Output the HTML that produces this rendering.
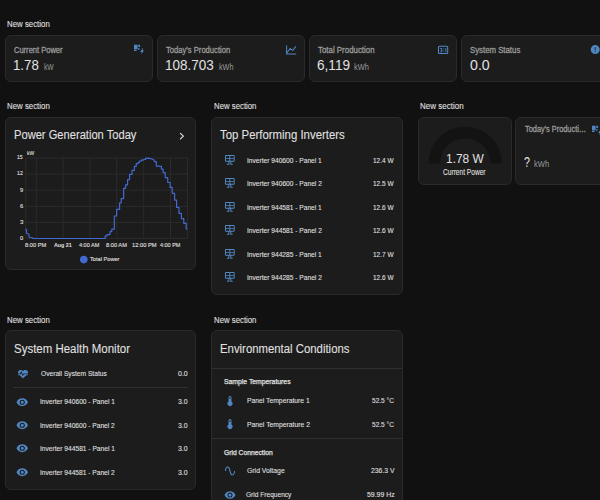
<!DOCTYPE html>
<html><head><meta charset="utf-8"><style>
html,body{margin:0;padding:0;width:600px;height:500px;overflow:hidden;background:#111111;}
body{position:relative;font-family:"Liberation Sans",sans-serif;}
.card{position:absolute;box-sizing:border-box;background:#1c1c1c;border:1px solid #2a2a2a;border-radius:6px;}
.t{position:absolute;white-space:nowrap;line-height:1;transform-origin:0 0;}
.ic{position:absolute;}
</style></head><body>
<div class="card" style="left:5px;top:35px;width:148px;height:47px;"></div>
<div class="card" style="left:157px;top:35px;width:148px;height:47px;"></div>
<div class="card" style="left:309px;top:35px;width:148px;height:47px;"></div>
<div class="card" style="left:461px;top:35px;width:148px;height:47px;"></div>
<div class="card" style="left:5px;top:117px;width:191px;height:153px;"></div>
<div class="card" style="left:211px;top:117px;width:192px;height:178px;"></div>
<svg class="ic" style="left:223.9px;top:154.0px;width:11.64px;height:11.64px" viewBox="0 0 24 24"><path fill="#5087c2" d="M4,2H20A2,2 0 0,1 22,4V14A2,2 0 0,1 20,16H15V20H18V22H13V16H11V22H6V20H9V16H4A2,2 0 0,1 2,14V4A2,2 0 0,1 4,2M4,4V8H11V4H4M4,14H11V10H4V14M20,14V10H13V14H20M20,4H13V8H20V4Z"/></svg>
<svg class="ic" style="left:223.9px;top:177.44px;width:11.64px;height:11.64px" viewBox="0 0 24 24"><path fill="#5087c2" d="M4,2H20A2,2 0 0,1 22,4V14A2,2 0 0,1 20,16H15V20H18V22H13V16H11V22H6V20H9V16H4A2,2 0 0,1 2,14V4A2,2 0 0,1 4,2M4,4V8H11V4H4M4,14H11V10H4V14M20,14V10H13V14H20M20,4H13V8H20V4Z"/></svg>
<svg class="ic" style="left:223.9px;top:200.88px;width:11.64px;height:11.64px" viewBox="0 0 24 24"><path fill="#5087c2" d="M4,2H20A2,2 0 0,1 22,4V14A2,2 0 0,1 20,16H15V20H18V22H13V16H11V22H6V20H9V16H4A2,2 0 0,1 2,14V4A2,2 0 0,1 4,2M4,4V8H11V4H4M4,14H11V10H4V14M20,14V10H13V14H20M20,4H13V8H20V4Z"/></svg>
<svg class="ic" style="left:223.9px;top:224.32px;width:11.64px;height:11.64px" viewBox="0 0 24 24"><path fill="#5087c2" d="M4,2H20A2,2 0 0,1 22,4V14A2,2 0 0,1 20,16H15V20H18V22H13V16H11V22H6V20H9V16H4A2,2 0 0,1 2,14V4A2,2 0 0,1 4,2M4,4V8H11V4H4M4,14H11V10H4V14M20,14V10H13V14H20M20,4H13V8H20V4Z"/></svg>
<svg class="ic" style="left:223.9px;top:247.76px;width:11.64px;height:11.64px" viewBox="0 0 24 24"><path fill="#5087c2" d="M4,2H20A2,2 0 0,1 22,4V14A2,2 0 0,1 20,16H15V20H18V22H13V16H11V22H6V20H9V16H4A2,2 0 0,1 2,14V4A2,2 0 0,1 4,2M4,4V8H11V4H4M4,14H11V10H4V14M20,14V10H13V14H20M20,4H13V8H20V4Z"/></svg>
<svg class="ic" style="left:223.9px;top:271.2px;width:11.64px;height:11.64px" viewBox="0 0 24 24"><path fill="#5087c2" d="M4,2H20A2,2 0 0,1 22,4V14A2,2 0 0,1 20,16H15V20H18V22H13V16H11V22H6V20H9V16H4A2,2 0 0,1 2,14V4A2,2 0 0,1 4,2M4,4V8H11V4H4M4,14H11V10H4V14M20,14V10H13V14H20M20,4H13V8H20V4Z"/></svg>
<div class="card" style="left:418px;top:117px;width:94px;height:68px;"></div>
<div class="card" style="left:515px;top:117px;width:94px;height:68px;"></div>
<div class="card" style="left:5px;top:330px;width:191px;height:160px;"></div>
<svg class="ic" style="left:16.5px;top:367.5px;width:12px;height:12px" viewBox="0 0 24 24"><path fill="#5087c2" d="M7.5,4A5.5,5.5 0 0,0 2,9.5C2,10 2.09,10.5 2.22,11H6.3L7.57,7.63C7.87,6.83 9.05,6.75 9.43,7.63L11.5,13L12.09,11.58C12.22,11.25 12.57,11 13,11H21.78C21.91,10.5 22,10 22,9.5A5.5,5.5 0 0,0 16.5,4C14.64,4 13,4.93 12,6.34C11,4.93 9.36,4 7.5,4V4M3,12.5A1,1 0 0,0 2,13.5A1,1 0 0,0 3,14.5H5.44L11,20C12,20.9 12,20.9 13,20L18.56,14.5H21A1,1 0 0,0 22,13.5A1,1 0 0,0 21,12.5H13.4L12.47,14.8C12.07,15.81 10.92,15.67 10.55,14.83L8.5,9.5L7.54,11.83C7.39,12.21 7.05,12.5 6.6,12.5H3Z"/></svg>
<div style="position:absolute;left:13px;top:387px;width:175px;height:1px;background:#303030"></div>
<svg class="ic" style="left:16.25px;top:395.65px;width:12.5px;height:12.5px" viewBox="0 0 24 24"><path fill="#5087c2" d="M12,9A3,3 0 0,0 9,12A3,3 0 0,0 12,15A3,3 0 0,0 15,12A3,3 0 0,0 12,9M12,17A5,5 0 0,1 7,12A5,5 0 0,1 12,7A5,5 0 0,1 17,12A5,5 0 0,1 12,17M12,4.5C7,4.5 2.73,7.61 1,12C2.73,16.39 7,19.5 12,19.5C17,19.5 21.27,16.39 23,12C21.27,7.61 17,4.5 12,4.5Z"/></svg>
<svg class="ic" style="left:16.25px;top:419.04999999999995px;width:12.5px;height:12.5px" viewBox="0 0 24 24"><path fill="#5087c2" d="M12,9A3,3 0 0,0 9,12A3,3 0 0,0 12,15A3,3 0 0,0 15,12A3,3 0 0,0 12,9M12,17A5,5 0 0,1 7,12A5,5 0 0,1 12,7A5,5 0 0,1 17,12A5,5 0 0,1 12,17M12,4.5C7,4.5 2.73,7.61 1,12C2.73,16.39 7,19.5 12,19.5C17,19.5 21.27,16.39 23,12C21.27,7.61 17,4.5 12,4.5Z"/></svg>
<svg class="ic" style="left:16.25px;top:442.45px;width:12.5px;height:12.5px" viewBox="0 0 24 24"><path fill="#5087c2" d="M12,9A3,3 0 0,0 9,12A3,3 0 0,0 12,15A3,3 0 0,0 15,12A3,3 0 0,0 12,9M12,17A5,5 0 0,1 7,12A5,5 0 0,1 12,7A5,5 0 0,1 17,12A5,5 0 0,1 12,17M12,4.5C7,4.5 2.73,7.61 1,12C2.73,16.39 7,19.5 12,19.5C17,19.5 21.27,16.39 23,12C21.27,7.61 17,4.5 12,4.5Z"/></svg>
<svg class="ic" style="left:16.25px;top:465.84999999999997px;width:12.5px;height:12.5px" viewBox="0 0 24 24"><path fill="#5087c2" d="M12,9A3,3 0 0,0 9,12A3,3 0 0,0 12,15A3,3 0 0,0 15,12A3,3 0 0,0 12,9M12,17A5,5 0 0,1 7,12A5,5 0 0,1 12,7A5,5 0 0,1 17,12A5,5 0 0,1 12,17M12,4.5C7,4.5 2.73,7.61 1,12C2.73,16.39 7,19.5 12,19.5C17,19.5 21.27,16.39 23,12C21.27,7.61 17,4.5 12,4.5Z"/></svg>
<div class="card" style="left:211px;top:330px;width:192px;height:191px;"></div>
<div style="position:absolute;left:212px;top:368px;width:190px;height:1px;background:#303030"></div>
<div style="position:absolute;left:212px;top:438px;width:190px;height:1px;background:#303030"></div>
<svg class="ic" style="left:223.5px;top:395px;width:12px;height:12px" viewBox="0 0 24 24"><path fill="#5087c2" d="M15 13V5A3 3 0 0 0 9 5V13A5 5 0 1 0 15 13M12 4A1 1 0 0 1 13 5V8H11V5A1 1 0 0 1 12 4Z"/></svg>
<svg class="ic" style="left:223.5px;top:418px;width:12px;height:12px" viewBox="0 0 24 24"><path fill="#5087c2" d="M15 13V5A3 3 0 0 0 9 5V13A5 5 0 1 0 15 13M12 4A1 1 0 0 1 13 5V8H11V5A1 1 0 0 1 12 4Z"/></svg>
<svg class="ic" style="left:223.5px;top:465px;width:12px;height:12px" viewBox="0 0 24 24"><path fill="#5087c2" d="M16.5,21C13.5,21 12.31,16.76 11.05,12.28C10.14,9.04 9,5 7.5,5C4.11,5 4,11.93 4,12H2C2,11.63 2.06,3 7.5,3C10.5,3 11.71,7.25 12.97,11.74C13.83,14.8 15,19 16.5,19C19.94,19 20.03,12.07 20.03,12H22.03C22.03,12.37 21.97,21 16.5,21Z"/></svg>
<svg class="ic" style="left:223.5px;top:489px;width:12px;height:12px" viewBox="0 0 24 24"><path fill="#5087c2" d="M12,9A3,3 0 0,0 9,12A3,3 0 0,0 12,15A3,3 0 0,0 15,12A3,3 0 0,0 12,9M12,17A5,5 0 0,1 7,12A5,5 0 0,1 12,7A5,5 0 0,1 17,12A5,5 0 0,1 12,17M12,4.5C7,4.5 2.73,7.61 1,12C2.73,16.39 7,19.5 12,19.5C17,19.5 21.27,16.39 23,12C21.27,7.61 17,4.5 12,4.5Z"/></svg>
<svg style="position:absolute;left:0;top:0" width="600" height="500" viewBox="0 0 600 500"><path d="M428.4,163.6 A36.8,36.8 0 0 1 502.0,163.6 L490.4,163.6 A25.2,25.2 0 0 0 440.0,163.6 Z" fill="#131313"/><line x1="25.5" y1="158" x2="187.5" y2="158" stroke="#2b2b2b" stroke-width="1"/><line x1="25.5" y1="174" x2="187.5" y2="174" stroke="#2b2b2b" stroke-width="1"/><line x1="25.5" y1="190.2" x2="187.5" y2="190.2" stroke="#2b2b2b" stroke-width="1"/><line x1="25.5" y1="206.4" x2="187.5" y2="206.4" stroke="#2b2b2b" stroke-width="1"/><line x1="25.5" y1="222.4" x2="187.5" y2="222.4" stroke="#2b2b2b" stroke-width="1"/><line x1="25.5" y1="238.4" x2="187.5" y2="238.4" stroke="#2b2b2b" stroke-width="1"/><line x1="25.75" y1="158" x2="25.75" y2="238.4" stroke="#2b2b2b" stroke-width="1"/><line x1="36.3" y1="158" x2="36.3" y2="238.4" stroke="#2b2b2b" stroke-width="1"/><line x1="63.1" y1="158" x2="63.1" y2="238.4" stroke="#2b2b2b" stroke-width="1"/><line x1="90.0" y1="158" x2="90.0" y2="238.4" stroke="#2b2b2b" stroke-width="1"/><line x1="116.8" y1="158" x2="116.8" y2="238.4" stroke="#2b2b2b" stroke-width="1"/><line x1="143.7" y1="158" x2="143.7" y2="238.4" stroke="#2b2b2b" stroke-width="1"/><line x1="170.5" y1="158" x2="170.5" y2="238.4" stroke="#2b2b2b" stroke-width="1"/><line x1="187.5" y1="158" x2="187.5" y2="238.4" stroke="#2b2b2b" stroke-width="1"/><path d="M25.75,229.25 L26.5,229.75 L26.5,233.25 L29,234.25 L29,237.25 L32,237.5 L33.25,238.5 L105.2,238.5 L105.2,235.8 L107,235.8 L107,234.6 L110,234.6 L110,231.6 L111.8,231.6 L111.8,229.2 L114.3,229.2 L114.3,216 L116.6,216 L116.6,209.4 L119.6,209.4 L119.6,202.8 L121.2,202.8 L121.2,198.6 L123.6,198.6 L123.6,188.4 L125.6,188.4 L125.6,184.8 L127.6,184.8 L127.6,179.6 L129.6,179.6 L129.6,174.4 L132,174.4 L132,170.4 L134.4,170.4 L134.4,166.4 L136.2,166.4 L136.2,163.7 L138,163.7 L138,162.5 L139.5,162.5 L139.5,161 L141.3,161 L141.3,160.1 L143.4,160.1 L143.4,159.5 L145.5,159.5 L145.5,158.3 L148,158.2 L150.6,158.6 L153.6,159.5 L154.5,161.6 L156.3,161.6 L156.3,166.1 L159,166.1 L160,166.4 L161.4,166.4 L161.4,169.2 L163.1,169.2 L163.1,172.7 L165.2,172.7 L165.2,177.6 L167.7,177.6 L167.7,182.5 L170.1,182.5 L170.1,187.4 L172.2,187.4 L172.2,193.3 L174.6,193.3 L174.6,200.2 L176.6,200.2 L176.6,207.4 L179,207.4 L179,213.4 L181.4,213.4 L181.4,218.6 L183.8,218.6 L183.8,223.4 L186.2,223.4 L186.2,229 L187,229" fill="none" stroke="#4269d0" stroke-width="1.2" stroke-linejoin="round" stroke-linecap="round"/><circle cx="83.8" cy="259.6" r="3.8" fill="#4269d0"/></svg>
<svg style="position:absolute;left:0;top:0" width="600" height="500" viewBox="0 0 600 500"><path fill="#5087c2" d="M134,44.8H137.6V48.9H134Z M138.3,44.8H140.1V47H138.3Z M134,49.5H136.6V51H134Z M137.6,49.3L139.2,47.8L139.8,48.8L138.2,50.2Z M142.6,48.2L140.2,52H141.8L141.2,54.3L144,50.4H142.4L143.2,48.2Z"/><path fill="#5087c2" d="M592,125.8H595.6V129.9H592Z M596.3,125.8H598.1V128H596.3Z M592,130.5H594.6V132H592Z M595.6,130.3L597.2,128.8L597.8,129.8L596.2,131.2Z M600.6,129.2L598.2,133H599.8L599.2,135.3L602,131.4H600.4L601.2,129.2Z"/><path fill="none" stroke="#5087c2" stroke-width="1.05" d="M286.6,45.4V53.9H296.2 M286.8,53 L290.2,48.4 L292.8,50.6 L295.8,46.4"/><rect x="438.5" y="46.3" width="9.2" height="7.2" rx="1" fill="none" stroke="#5087c2" stroke-width="1.05"/><path fill="#5087c2" d="M440.2,48H442.2V52.2H440.2V51.4H441.4V50.5H440.6V49.8H441.4V48.8H440.2Z M443.4,48.6H444.2V49.4H443.4Z M443.4,50.8H444.2V51.6H443.4Z M445.4,48H446.3V52.2H445.4Z"/><circle cx="595.2" cy="49.6" r="4.5" fill="#5087c2"/><rect x="594.75" y="47.2" width="0.9" height="3.1" fill="#1c1c1c"/><rect x="594.75" y="50.9" width="0.9" height="0.9" fill="#1c1c1c"/></svg>
<div class="t" style="left:6.59px;top:19.89px;font-size:8.4px;font-weight:400;color:#e1e1e1;transform:scaleX(0.9377);-webkit-text-stroke:0.08px currentColor;">New section</div>
<div class="t" style="left:13.64px;top:45.72px;font-size:8.6px;font-weight:400;color:#9b9b9b;transform:scaleX(0.8755);-webkit-text-stroke:0.3px currentColor;">Current Power</div>
<div class="t" style="left:13.34px;top:58.15px;font-size:14px;font-weight:400;color:#e1e1e1;transform:scaleX(0.9470);">1.78</div>
<div class="t" style="left:43.57px;top:63.10px;font-size:8.5px;font-weight:400;color:#9b9b9b;transform:scaleX(0.7922);">kW</div>
<div class="t" style="left:166.46px;top:45.72px;font-size:8.6px;font-weight:400;color:#9b9b9b;transform:scaleX(0.8877);-webkit-text-stroke:0.3px currentColor;">Today's Production</div>
<div class="t" style="left:165.40px;top:58.15px;font-size:14px;font-weight:400;color:#e1e1e1;transform:scaleX(0.9643);">108.703</div>
<div class="t" style="left:218.91px;top:63.10px;font-size:8.5px;font-weight:400;color:#9b9b9b;transform:scaleX(0.8510);">kWh</div>
<div class="t" style="left:317.65px;top:45.72px;font-size:8.6px;font-weight:400;color:#9b9b9b;transform:scaleX(0.9178);-webkit-text-stroke:0.3px currentColor;">Total Production</div>
<div class="t" style="left:317.41px;top:58.15px;font-size:14px;font-weight:400;color:#e1e1e1;transform:scaleX(0.9708);">6,119</div>
<div class="t" style="left:354.41px;top:63.10px;font-size:8.5px;font-weight:400;color:#9b9b9b;transform:scaleX(0.8759);">kWh</div>
<div class="t" style="left:469.55px;top:45.72px;font-size:8.6px;font-weight:400;color:#9b9b9b;transform:scaleX(0.9075);-webkit-text-stroke:0.3px currentColor;">System Status</div>
<div class="t" style="left:469.55px;top:58.15px;font-size:14px;font-weight:400;color:#e1e1e1;transform:scaleX(1.0132);">0.0</div>
<div class="t" style="left:6.59px;top:101.79px;font-size:8.4px;font-weight:400;color:#e1e1e1;transform:scaleX(0.9377);-webkit-text-stroke:0.08px currentColor;">New section</div>
<div class="t" style="left:213.62px;top:101.79px;font-size:8.4px;font-weight:400;color:#e1e1e1;transform:scaleX(0.9303);-webkit-text-stroke:0.08px currentColor;">New section</div>
<div class="t" style="left:420.18px;top:101.79px;font-size:8.4px;font-weight:400;color:#e1e1e1;transform:scaleX(0.9555);-webkit-text-stroke:0.08px currentColor;">New section</div>
<div class="t" style="left:13.54px;top:129.04px;font-size:12px;font-weight:400;color:#e1e1e1;transform:scaleX(0.9284);-webkit-text-stroke:0.08px currentColor;">Power Generation Today</div>
<div class="t" style="left:220.39px;top:128.54px;font-size:12px;font-weight:400;color:#e1e1e1;transform:scaleX(0.9496);-webkit-text-stroke:0.08px currentColor;">Top Performing Inverters</div>
<div class="t" style="left:445.78px;top:151.64px;font-size:13.3px;font-weight:400;color:#e1e1e1;transform:scaleX(0.8964);">1.78 W</div>
<div class="t" style="left:443.48px;top:167.97px;font-size:8.3px;font-weight:400;color:#e1e1e1;transform:scaleX(0.7955);-webkit-text-stroke:0.08px currentColor;">Current Power</div>
<div class="t" style="left:524.85px;top:124.72px;font-size:8.6px;font-weight:400;color:#9b9b9b;transform:scaleX(0.8575);-webkit-text-stroke:0.3px currentColor;">Today's Producti…</div>
<div class="t" style="left:523.83px;top:154.85px;font-size:14px;font-weight:400;color:#e1e1e1;transform:scaleX(0.7615);">?</div>
<div class="t" style="left:533.52px;top:159.80px;font-size:8.5px;font-weight:400;color:#9b9b9b;transform:scaleX(0.8890);">kWh</div>
<div class="t" style="left:6.59px;top:315.89px;font-size:8.4px;font-weight:400;color:#e1e1e1;transform:scaleX(0.9377);-webkit-text-stroke:0.08px currentColor;">New section</div>
<div class="t" style="left:214.12px;top:315.89px;font-size:8.4px;font-weight:400;color:#e1e1e1;transform:scaleX(0.9303);-webkit-text-stroke:0.08px currentColor;">New section</div>
<div class="t" style="left:13.52px;top:342.54px;font-size:12px;font-weight:400;color:#e1e1e1;transform:scaleX(0.9561);-webkit-text-stroke:0.08px currentColor;">System Health Monitor</div>
<div class="t" style="left:40.60px;top:369.87px;font-size:7px;font-weight:400;color:#e1e1e1;transform:scaleX(0.9497);-webkit-text-stroke:0.08px currentColor;">Overall System Status</div>
<div class="t" style="left:178.24px;top:369.87px;font-size:7px;font-weight:400;color:#e1e1e1;transform:scaleX(0.9980);-webkit-text-stroke:0.08px currentColor;">0.0</div>
<div class="t" style="left:220.13px;top:343.34px;font-size:12px;font-weight:400;color:#e1e1e1;transform:scaleX(0.9468);-webkit-text-stroke:0.08px currentColor;">Environmental Conditions</div>
<div class="t" style="left:223.76px;top:378.07px;font-size:7px;font-weight:400;color:#e1e1e1;transform:scaleX(0.9736);-webkit-text-stroke:0.25px currentColor;">Sample Temperatures</div>
<div class="t" style="left:246.66px;top:397.07px;font-size:7px;font-weight:400;color:#e1e1e1;transform:scaleX(0.9673);-webkit-text-stroke:0.08px currentColor;">Panel Temperature 1</div>
<div class="t" style="left:372.44px;top:397.07px;font-size:7px;font-weight:400;color:#e1e1e1;transform:scaleX(0.9369);-webkit-text-stroke:0.08px currentColor;">52.5 °C</div>
<div class="t" style="left:246.68px;top:420.87px;font-size:7px;font-weight:400;color:#e1e1e1;transform:scaleX(0.9704);-webkit-text-stroke:0.08px currentColor;">Panel Temperature 2</div>
<div class="t" style="left:372.44px;top:421.17px;font-size:7px;font-weight:400;color:#e1e1e1;transform:scaleX(0.9369);-webkit-text-stroke:0.08px currentColor;">52.5 °C</div>
<div class="t" style="left:223.73px;top:448.67px;font-size:7px;font-weight:400;color:#e1e1e1;transform:scaleX(0.9617);-webkit-text-stroke:0.25px currentColor;">Grid Connection</div>
<div class="t" style="left:246.86px;top:467.07px;font-size:7px;font-weight:400;color:#e1e1e1;transform:scaleX(0.9782);-webkit-text-stroke:0.08px currentColor;">Grid Voltage</div>
<div class="t" style="left:370.59px;top:467.07px;font-size:7px;font-weight:400;color:#e1e1e1;transform:scaleX(0.9723);-webkit-text-stroke:0.08px currentColor;">236.3 V</div>
<div class="t" style="left:246.42px;top:491.27px;font-size:7px;font-weight:400;color:#e1e1e1;transform:scaleX(0.9410);-webkit-text-stroke:0.08px currentColor;">Grid Frequency</div>
<div class="t" style="left:367.14px;top:491.27px;font-size:7px;font-weight:400;color:#e1e1e1;transform:scaleX(0.9876);-webkit-text-stroke:0.08px currentColor;">59.99 Hz</div>
<div class="t" style="left:26.61px;top:149.92px;font-size:6px;font-weight:400;color:#e1e1e1;transform:scaleX(0.8254);-webkit-text-stroke:0.1px currentColor;">kW</div>
<div class="t" style="left:25.21px;top:242.76px;font-size:5.6px;font-weight:400;color:#e1e1e1;transform:scaleX(1.0209);-webkit-text-stroke:0.1px currentColor;">8:00 PM</div>
<div class="t" style="left:53.90px;top:242.76px;font-size:5.6px;font-weight:700;color:#e1e1e1;transform:scaleX(0.9522);">Aug 21</div>
<div class="t" style="left:79.26px;top:242.76px;font-size:5.6px;font-weight:400;color:#e1e1e1;transform:scaleX(0.9863);-webkit-text-stroke:0.1px currentColor;">4:00 AM</div>
<div class="t" style="left:106.20px;top:242.76px;font-size:5.6px;font-weight:400;color:#e1e1e1;transform:scaleX(1.0169);-webkit-text-stroke:0.1px currentColor;">8:00 AM</div>
<div class="t" style="left:131.76px;top:242.76px;font-size:5.6px;font-weight:400;color:#e1e1e1;transform:scaleX(1.0263);-webkit-text-stroke:0.1px currentColor;">12:00 PM</div>
<div class="t" style="left:160.25px;top:242.76px;font-size:5.6px;font-weight:400;color:#e1e1e1;transform:scaleX(0.9777);-webkit-text-stroke:0.1px currentColor;">4:00 PM</div>
<div class="t" style="left:90.25px;top:255.92px;font-size:6px;font-weight:400;color:#e1e1e1;transform:scaleX(0.9404);-webkit-text-stroke:0.1px currentColor;">Total Power</div>
<div class="t" style="left:247.38px;top:156.87px;font-size:7px;font-weight:400;color:#e1e1e1;transform:scaleX(0.9464);-webkit-text-stroke:0.08px currentColor;">Inverter 940600 - Panel 1</div>
<div class="t" style="left:373.11px;top:156.87px;font-size:7px;font-weight:400;color:#e1e1e1;transform:scaleX(0.9261);-webkit-text-stroke:0.08px currentColor;">12.4 W</div>
<div class="t" style="left:247.39px;top:180.31px;font-size:7px;font-weight:400;color:#e1e1e1;transform:scaleX(0.9474);-webkit-text-stroke:0.08px currentColor;">Inverter 940600 - Panel 2</div>
<div class="t" style="left:373.11px;top:180.31px;font-size:7px;font-weight:400;color:#e1e1e1;transform:scaleX(0.9261);-webkit-text-stroke:0.08px currentColor;">12.5 W</div>
<div class="t" style="left:247.38px;top:203.75px;font-size:7px;font-weight:400;color:#e1e1e1;transform:scaleX(0.9464);-webkit-text-stroke:0.08px currentColor;">Inverter 944581 - Panel 1</div>
<div class="t" style="left:373.11px;top:203.75px;font-size:7px;font-weight:400;color:#e1e1e1;transform:scaleX(0.9261);-webkit-text-stroke:0.08px currentColor;">12.6 W</div>
<div class="t" style="left:247.39px;top:227.19px;font-size:7px;font-weight:400;color:#e1e1e1;transform:scaleX(0.9474);-webkit-text-stroke:0.08px currentColor;">Inverter 944581 - Panel 2</div>
<div class="t" style="left:373.11px;top:227.19px;font-size:7px;font-weight:400;color:#e1e1e1;transform:scaleX(0.9261);-webkit-text-stroke:0.08px currentColor;">12.6 W</div>
<div class="t" style="left:247.38px;top:250.63px;font-size:7px;font-weight:400;color:#e1e1e1;transform:scaleX(0.9464);-webkit-text-stroke:0.08px currentColor;">Inverter 944285 - Panel 1</div>
<div class="t" style="left:373.11px;top:250.63px;font-size:7px;font-weight:400;color:#e1e1e1;transform:scaleX(0.9261);-webkit-text-stroke:0.08px currentColor;">12.7 W</div>
<div class="t" style="left:247.39px;top:274.07px;font-size:7px;font-weight:400;color:#e1e1e1;transform:scaleX(0.9474);-webkit-text-stroke:0.08px currentColor;">Inverter 944285 - Panel 2</div>
<div class="t" style="left:373.11px;top:274.07px;font-size:7px;font-weight:400;color:#e1e1e1;transform:scaleX(0.9261);-webkit-text-stroke:0.08px currentColor;">12.6 W</div>
<div class="t" style="left:40.48px;top:398.47px;font-size:7px;font-weight:400;color:#e1e1e1;transform:scaleX(0.9486);-webkit-text-stroke:0.08px currentColor;">Inverter 940600 - Panel 1</div>
<div class="t" style="left:178.37px;top:398.47px;font-size:7px;font-weight:400;color:#e1e1e1;transform:scaleX(0.9804);-webkit-text-stroke:0.08px currentColor;">3.0</div>
<div class="t" style="left:40.48px;top:421.87px;font-size:7px;font-weight:400;color:#e1e1e1;transform:scaleX(0.9462);-webkit-text-stroke:0.08px currentColor;">Inverter 940600 - Panel 2</div>
<div class="t" style="left:178.37px;top:421.87px;font-size:7px;font-weight:400;color:#e1e1e1;transform:scaleX(0.9804);-webkit-text-stroke:0.08px currentColor;">3.0</div>
<div class="t" style="left:40.48px;top:445.27px;font-size:7px;font-weight:400;color:#e1e1e1;transform:scaleX(0.9486);-webkit-text-stroke:0.08px currentColor;">Inverter 944581 - Panel 1</div>
<div class="t" style="left:178.37px;top:445.27px;font-size:7px;font-weight:400;color:#e1e1e1;transform:scaleX(0.9804);-webkit-text-stroke:0.08px currentColor;">3.0</div>
<div class="t" style="left:40.48px;top:468.67px;font-size:7px;font-weight:400;color:#e1e1e1;transform:scaleX(0.9462);-webkit-text-stroke:0.08px currentColor;">Inverter 944581 - Panel 2</div>
<div class="t" style="left:178.37px;top:468.67px;font-size:7px;font-weight:400;color:#e1e1e1;transform:scaleX(0.9804);-webkit-text-stroke:0.08px currentColor;">3.0</div>
<div class="t" style="left:17.24px;top:154.42px;font-size:6px;font-weight:400;color:#e1e1e1;transform:scaleX(0.8566);-webkit-text-stroke:0.1px currentColor;">15</div>
<div class="t" style="left:17.18px;top:170.42px;font-size:6px;font-weight:400;color:#e1e1e1;transform:scaleX(0.8699);-webkit-text-stroke:0.1px currentColor;">12</div>
<div class="t" style="left:19.76px;top:186.62px;font-size:6px;font-weight:400;color:#e1e1e1;transform:scaleX(0.9503);-webkit-text-stroke:0.1px currentColor;">9</div>
<div class="t" style="left:19.88px;top:202.82px;font-size:6px;font-weight:400;color:#e1e1e1;transform:scaleX(0.9601);-webkit-text-stroke:0.1px currentColor;">6</div>
<div class="t" style="left:19.59px;top:218.82px;font-size:6px;font-weight:400;color:#e1e1e1;transform:scaleX(1.0302);-webkit-text-stroke:0.1px currentColor;">3</div>
<div class="t" style="left:19.71px;top:234.92px;font-size:6px;font-weight:400;color:#e1e1e1;transform:scaleX(0.9582);-webkit-text-stroke:0.1px currentColor;">0</div>
<svg style="position:absolute;left:0;top:0" width="600" height="500"><polyline points="180.4,133.3 183.4,136.1 180.4,138.9" fill="none" stroke="#e1e1e1" stroke-width="1.15" stroke-linecap="round" stroke-linejoin="round"/></svg>
</body></html>
